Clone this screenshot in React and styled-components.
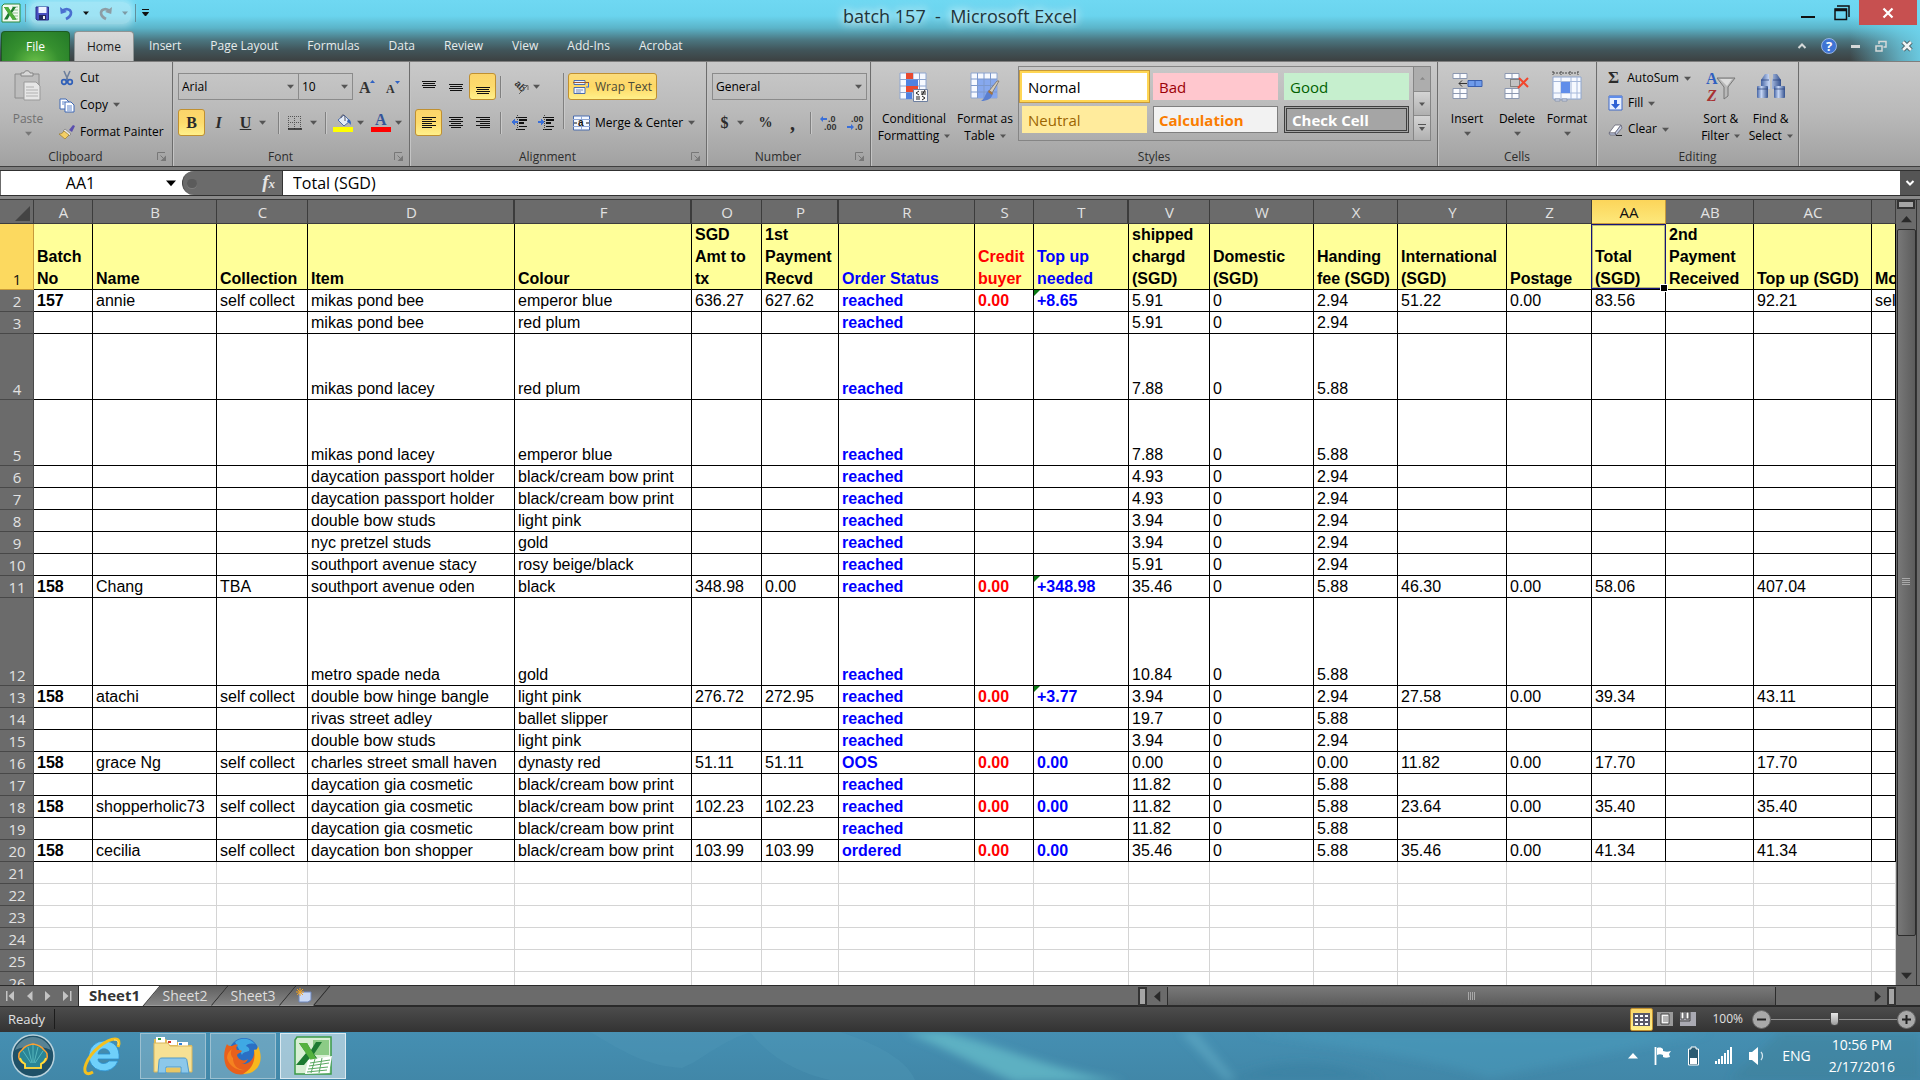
import React, { useState } from 'react';
import styled, { createGlobalStyle, css } from 'styled-components';

const GlobalStyle = createGlobalStyle`
	* {
		box-sizing:border-box;
	}

	body {
		margin:0;
		font-family:"Open Sans", "Noto Sans", sans-serif;
		font-size:12px;
		line-height:16px;
		color:#000;
		background-color:#6b6b6b;
	}

	button, input, select {
		margin:0;
		padding:0;
		border:0;
		border-radius:0;
		font:inherit;
		color:inherit;
		background:transparent;
		appearance:none;
		outline:0;
	}

	svg {
		display:block;
		flex-shrink:0;
		overflow:visible;
	}
`;

const Desktop = styled.div`
	display:flex;
	flex-direction:column;
	height:100vh;
	overflow:hidden;
`;

/* 제목 표시줄 */
const TopArea = styled.header`
	background:
		linear-gradient(to left, rgba(111,214,239,.9) 0, rgba(111,214,239,.7) 20px, rgba(111,214,239,0) 70px),
		linear-gradient(#6fd8f2 0, #6ad4ee 16px, #5bb4c9 28px, #4b7680 40px, #41555a 50px, #3d4344 60px);
`;

const TitleBar = styled.div`
	display:grid;
	grid-template-columns:1fr auto 1fr;
	align-items:start;
	height:31px;
`;

const QuickAccess = styled.div`
	display:flex;
	align-items:center;
	height:26px;
	padding-left:1px;
`;

const QuickGroup = styled.div`
	display:flex;
	align-items:center;
	gap:10px;
	height:22px;
	margin:0 4px;
	padding:0 3px 0 5px;
	border-radius:8px;
	background-color:rgba(255,255,255,.35);
	box-shadow:0 0 6px 3px rgba(255,255,255,.35);
`;

const QuickLine = styled.span`
	width:1px;
	height:18px;
	margin-left:4px;
	background-color:#5f8f9c;
`;

const Title = styled.h1`
	margin:0;
	font-size:18px;
	font-weight:400;
	line-height:32px;
	white-space:pre;
	color:#20343a;
	text-shadow:0 0 8px #fff, 0 0 12px rgba(255,255,255,.8);
`;

const WindowBtns = styled.div`
	display:flex;
	justify-content:flex-end;
	padding-right:3px;
`;

const WindowBtn = styled.button`
	display:flex;
	justify-content:center;
	align-items:center;
	width:${p => p.$close ? '58px' : '34px'};
	height:25px;
	background-color:${p => p.$close ? '#c75050' : 'transparent'};
`;

const TabBar = styled.nav`
	display:flex;
	align-items:stretch;
	height:30px;
	padding-left:1px;
`;

const FileTab = styled.button`
	width:69px;
	margin-right:4px;
	border:1px solid #1d5c22;
	border-bottom:0;
	border-radius:4px 4px 0 0;
	color:#fff;
	background:radial-gradient(ellipse at 50% 110%, #6cc24a 0, #36902f 50%, #237a28 100%);
`;

const RibbonTab = styled.button`
	margin-right:1px;
	padding:0 14px;
	border-radius:4px 4px 0 0;
	color:#e6ecec;

	${p => p.$on && css`
		padding:0 12px;
		color:#1b1b1b;
		border:1px solid #8e9494;
		border-bottom:0;
		background:linear-gradient(#d8d8d8, #c6c6c6);
	`}
`;

const DocBtns = styled.div`
	display:flex;
	align-items:center;
	gap:14px;
	margin-left:auto;
	padding-right:7px;
`;

/* 리본 메뉴 */
const Ribbon = styled.section`
	display:flex;
	height:106px;
	border-top:1px solid #7e7e7e;
	border-bottom:1px solid #3f3f3f;
	background:linear-gradient(#c9c9c9, #b9b9b9 50%, #a1a1a1);
`;

const Group = styled.div`
	display:flex;
	flex-direction:column;
	flex-shrink:0;
	width:${p => p.$w}px;
	border-right:1px solid #6d6d6d;
	box-shadow:1px 0 0 #c4c4c4;
`;

const GroupBody = styled.div`
	display:flex;
	flex:1;
	gap:${p => p.$gap || 0}px;
	padding:${p => p.$pad || '8px 5px 0'};
`;

const GroupFoot = styled.div`
	display:flex;
	align-items:center;
	gap:6px;
	height:18px;
	padding-right:${p => p.$launcher ? 5 : 0}px;
	color:#2c2c2c;

	span {
		flex:1;
		text-align:center;
	}
`;

const BigBtn = styled.button`
	display:flex;
	flex-direction:column;
	align-items:center;
	width:${p => p.$w}px;
	padding-top:6px;
	line-height:17px;
	white-space:nowrap;
	color:${p => p.$off ? '#707070' : '#000'};

	& > svg:first-child {
		margin-bottom:8px;
	}

	& > svg:last-child {
		margin-top:3px;
	}
`;

const BigText = styled.span`
	display:flex;
	align-items:center;
	gap:5px;
	min-height:17px;
`;

const Stack = styled.div`
	display:flex;
	flex-direction:column;
	align-items:flex-start;
	gap:${p => p.$gap || 0}px;
`;

const Line = styled.div`
	display:flex;
	align-items:center;
	gap:${p => p.$gap || 0}px;
	height:27px;
`;

const TextBtn = styled.button`
	display:flex;
	align-items:center;
	gap:5px;
	height:${p => p.$h || 27}px;
	padding:0 4px;
	border:1px solid transparent;
	border-radius:3px;
	white-space:nowrap;

	${p => p.$on && css`
		color:#4a4a3a;
		border-color:#c09030;
		background:linear-gradient(#fbdc7c, #fed865 50%, #fff08a);
	`}
`;

const ToolBtn = styled.button`
	display:flex;
	justify-content:center;
	align-items:center;
	gap:4px;
	width:${p => p.$w || 27}px;
	height:27px;
	border:1px solid transparent;
	border-radius:3px;

	${p => p.$on && css`
		border-color:#c09030;
		background:linear-gradient(#fbd46a, #fddb6c 50%, #fff08a);
	`}
`;

const Glyph = styled.span`
	font-family:"Liberation Serif", serif;
	font-size:${p => p.$size || 16}px;
	font-weight:bold;
	font-style:${p => p.$italic ? 'italic' : 'normal'};
	text-decoration:${p => p.$under ? 'underline' : 'none'};
	color:#2b2b2b;
`;

const VLine = styled.span`
	width:1px;
	height:${p => p.$h || 22}px;
	margin:0 ${p => p.$m || 4}px;
	background-color:#808080;
	box-shadow:1px 0 0 #c9c9c9;
`;

const Picker = styled.label`
	display:flex;
	align-items:center;
	width:${p => p.$w}px;
	height:27px;
	padding-right:4px;
	border:1px solid #8b8b8b;
	margin-left:${p => p.$joined ? '-1px' : '0'};

	select {
		flex:1;
		min-width:0;
		height:25px;
		padding-left:3px;
	}
`;

const Gallery = styled.div`
	display:flex;
	height:75px;
	border:1px solid #858585;
`;

const GalleryGrid = styled.div`
	display:grid;
	grid-template-columns:repeat(3, 125px);
	grid-auto-rows:27px;
	gap:6px;
	padding:6px 4px 0 3px;
`;

const StyleCell = styled.button`
	display:flex;
	align-items:center;
	padding:0 5px;
	font-size:15px;
	line-height:20px;
	font-weight:${p => p.$bold ? 'bold' : 'normal'};
	color:${p => p.$color};
	background-color:${p => p.$bg};
	border:${p => p.$border || '1px solid transparent'};

	${p => p.$on && css`
		outline:2px solid #ffd653;
		box-shadow:0 0 0 3px #c79a3a;
	`}
`;

const GalleryBtns = styled.div`
	display:flex;
	flex-direction:column;
	width:17px;
	border-left:1px solid #858585;
`;

const GalleryBtn = styled.button`
	display:flex;
	flex:1;
	justify-content:center;
	align-items:center;
	background:${p => p.$off ? '#adadad' : 'linear-gradient(#d4d4d4, #b0b0b0)'};

	& + & {
		border-top:1px solid #8b8b8b;
	}
`;

/* 수식 입력줄 */
const FormulaBar = styled.div`
	display:flex;
	height:33px;
	padding:4px 0 0 1px;
	background:linear-gradient(#7d7d7d 0, #7d7d7d 3px, #303030 3px, #303030 4px, #6b6b6b 4px, #6b6b6b 28px, #303030 28px, #303030 29px, #8a8a8a 29px, #8a8a8a 32px, #3a3a3a 32px);
	font-size:16px;
`;

const NameBox = styled.label`
	display:flex;
	align-items:center;
	width:193px;
	height:24px;
	padding-right:18px;
	background-color:#fff;

	input {
		flex:1;
		min-width:0;
		padding-right:6px;
		text-align:center;
	}
`;

const FxArea = styled.div`
	display:flex;
	justify-content:space-between;
	align-items:center;
	width:101px;
	height:24px;
	margin-left:-12px;
	padding:0 7px 0 4px;
	border-right:1px solid #333;
	border-left:1px solid #444;
	border-radius:12px 0 0 12px;
	background-color:#6b6b6b;
`;

const FxDot = styled.span`
	width:10px;
	height:9px;
	border-radius:5px;
	background-color:#5b5b5b;
	box-shadow:0 1px 0 #7c7c7c;
`;

const FxText = styled.span`
	font-family:"Liberation Serif", serif;
	font-size:19px;
	font-style:italic;
	font-weight:bold;
	color:#e4e4e4;

	small {
		font-size:13px;
	}
`;

const FormulaInput = styled.input`
	flex:1;
	height:24px;
	padding-left:10px;
	background-color:#fff;
`;

const ExpandBtn = styled.button`
	display:flex;
	justify-content:center;
	align-items:center;
	width:20px;
	height:24px;
	background-color:#555;
`;

/* 시트 */
const SheetArea = styled.main`
	display:flex;
	flex:1;
	min-height:0;
`;

const SheetView = styled.div`
	flex:1;
	min-width:0;
	overflow:hidden;
	background-color:#fff;
`;

const Table = styled.table`
	width:100%;
	table-layout:fixed;
	border-spacing:0;
	font-family:"Liberation Sans", Arial, sans-serif;
	font-size:16px;
	line-height:22px;
`;

const ColHead = styled.th`
	height:24px;
	padding:0;
	font-family:"Open Sans", sans-serif;
	font-size:15px;
	font-weight:400;
	line-height:23px;
	color:${p => p.$on ? '#111' : '#e2e2e2'};
	background:${p => p.$on ? 'linear-gradient(#fcd55a, #fde97c)' : '#6b6b6b'};
	box-shadow:inset -${p => p.$thick ? 2 : 1}px -1px 0 ${p => p.$on ? '#c79a3a' : '#3c3c3c'};

	svg {
		margin:2px 4px 0 auto;
	}
`;

const RowHead = styled.th`
	height:${p => p.$h}px;
	padding:0;
	font-family:"Open Sans", sans-serif;
	font-size:15px;
	font-weight:400;
	vertical-align:bottom;
	color:${p => p.$on ? '#111' : '#e2e2e2'};
	background:${p => p.$on ? '#fcd95f' : '#6b6b6b'};
	box-shadow:inset -1px -1px 0 ${p => p.$on ? '#c79a3a' : '#484848'};
`;

const inks = {
	red: '#f00',
	blue: '#00f',
	black: '#000'
};

const Cell = styled.td`
	position:relative;
	padding:0 0 0 3px;
	overflow:hidden;
	vertical-align:bottom;
	white-space:pre;
	font-weight:${p => p.$bold ? 'bold' : 'normal'};
	color:${p => inks[p.$ink] || '#000'};
	background-color:${p => p.$head ? '#ff9' : '#fff'};
	box-shadow:inset -1px -1px 0 ${p => p.$empty ? '#d4d4d4' : '#000'};

	${p => p.$flag && css`
		&::before {
			content:"";
			position:absolute;
			top:0;
			left:0;
			border-top:6px solid #0a7a14;
			border-right:6px solid transparent;
		}
	`}

	${p => p.$selected && css`
		overflow:visible;

		&::before {
			content:"";
			position:absolute;
			inset:0 0 1px -1px;
			border:1px solid #14147a;
			box-shadow:inset 0 0 0 1px #b8b878;
		}

		&::after {
			content:"";
			position:absolute;
			z-index:1;
			right:-2px;
			bottom:-2px;
			width:6px;
			height:6px;
			border:1px solid #fff;
			background-color:#000;
		}
	`}
`;

const VScroll = styled.div`
	display:flex;
	flex-direction:column;
	align-items:center;
	width:24px;
	padding-right:1px;
	border-right:3px solid #6b6b6b;
	background:linear-gradient(to right, #6b6b6b 20px, #333 20px);
`;

const SplitGrip = styled.span`
	flex-shrink:0;
	width:${p => p.$side ? '9px' : '18px'};
	height:${p => p.$side ? '19px' : '9px'};
	border:2px solid #333;
	background-color:#a5a5a5;
`;

const ScrollBtn = styled.button`
	display:flex;
	flex-shrink:0;
	justify-content:center;
	align-items:center;
	width:20px;
	height:20px;
`;

const VTrack = styled.div`
	flex:1;
	width:19px;
`;

const VThumb = styled.div`
	display:flex;
	justify-content:center;
	align-items:center;
	height:96%;
	border:1px solid #2c2c2c;
	border-radius:2px;
	background:linear-gradient(to right, #787878, #5c5c5c);
`;

const SheetFoot = styled.div`
	display:grid;
	grid-template-columns:minmax(0, 1138fr) minmax(0, 782fr);
	height:22px;
	border-top:1px solid #2a2a2a;
	border-bottom:2px solid #2a2a2a;
	background-color:#6b6b6b;
`;

const SheetTabs = styled.div`
	display:flex;
	min-width:0;
	overflow:hidden;
`;

const SheetNav = styled.div`
	position:relative;
	z-index:3;
	display:flex;
	justify-content:space-around;
	align-items:center;
	width:79px;
	border-right:1px solid #2a2a2a;
	background-color:#6b6b6b;
`;

const SheetTab = styled.button`
	position:relative;
	z-index:${p => p.$on ? 2 : 1};
	width:${p => p.$w}px;
	padding:0 2px 2px 0;
	font-size:${p => p.$on ? 15 : 14}px;
	font-weight:${p => p.$on ? 'bold' : 'normal'};
	line-height:17px;
	color:${p => p.$on ? '#333' : '#dedede'};

	&::before {
		content:"";
		position:absolute;
		z-index:-1;
		inset:0 0 0 ${p => p.$on ? '-14px' : '0'};
		border-right:1px solid #222;
		border-bottom:${p => p.$on ? '0' : '1px solid #999'};
		background:${p => p.$on ? '#fff' : 'linear-gradient(#5f5f5f, #868686)'};
		transform:skewX(-40deg);
	}

	svg {
		margin:0 auto;
	}
`;

const HScroll = styled.div`
	display:flex;
	align-items:center;
	padding-right:24px;
`;

const HTrack = styled.div`
	flex:1;
	height:19px;
`;

const HThumb = styled.div`
	display:flex;
	justify-content:center;
	align-items:center;
	width:87%;
	height:19px;
	border:1px solid #2c2c2c;
	border-top:0;
	background:linear-gradient(#787878, #5c5c5c);
`;

/* 상태 표시줄 */
const StatusBar = styled.div`
	display:flex;
	align-items:center;
	height:25px;
	padding:0 4px 1px 8px;
	color:#e2e2e2;
	background:linear-gradient(#4c4c4c, #333);
`;

const StatusText = styled.span`
	font-size:13px;
	padding-right:9px;
	border-right:1px solid #1c1c1c;
	line-height:20px;
`;

const StatusRight = styled.div`
	display:flex;
	align-items:center;
	margin-left:auto;
`;

const ViewBtn = styled.button`
	display:flex;
	justify-content:center;
	align-items:center;
	width:23px;
	height:23px;
	border-radius:2px;
	border:${p => p.$on ? '1px solid #c09030' : '0'};
	background:${p => p.$on ? 'linear-gradient(#fbd668, #fff08a)' : 'transparent'};
`;

const ZoomValue = styled.span`
	margin:0 9px 0 13px;
`;

const ZoomRange = styled.input`
	width:126px;
	height:20px;
	background:linear-gradient(#8f8f8f, #8f8f8f) center / 100% 1px no-repeat;

	&::-webkit-slider-thumb {
		appearance:none;
		width:9px;
		height:14px;
		border:1px solid #444;
		border-radius:1px 1px 4px 4px;
		background:linear-gradient(#e8e8e8, #9c9c9c);
	}
`;

/* 작업 표시줄 */
const Taskbar = styled.footer`
	position:relative;
	display:flex;
	align-items:center;
	gap:4px;
	height:48px;
	overflow:hidden;
	color:#fff;
	background:linear-gradient(#458fb2, #4187a8);
`;

const Wave = styled.svg`
	position:absolute;
	top:0;
	left:0;
	width:100%;
	height:100%;
`;

const TaskBtn = styled.button`
	position:relative;
	display:flex;
	justify-content:center;
	align-items:center;
	width:66px;
	height:46px;
	border:1px solid ${p => p.$active ? '#dceaf1' : p.$open ? '#9cc0d1' : 'transparent'};
	background-color:${p => p.$active ? 'rgba(255,255,255,.5)' : p.$open ? 'rgba(255,255,255,.2)' : 'transparent'};
`;

const Tray = styled.div`
	position:relative;
	display:flex;
	align-items:center;
	gap:16px;
	margin-left:auto;
	padding-right:25px;
	font-size:14px;
`;

const Clock = styled.div`
	margin-left:2px;
	line-height:22px;
	text-align:center;
`;

const Arrow = ({ w = 7, color = '#555', dir = 'down' }) => {
	const turn = { down: 0, left: 90, up: 180, right: 270 }[dir];
	return (
		<svg width={w} height={w} viewBox="0 0 8 8" aria-hidden="true">
			<path d="M0 2h8L4 6.500z" fill={color} transform={`rotate(${turn} 4 4)`} />
		</svg>
	);
};

const Launcher = () => (
	<svg width="10" height="10" viewBox="0 0 10 10" fill="none">
		<path d="M.5 8V.5H8" stroke="#777" />
		<path d="M3.500 3.500l3 3" stroke="#777" />
		<path d="M9 3.500V9H3.500z" fill="#777" />
	</svg>
);

const ExcelMini = () => (
	<svg width="20" height="20" viewBox="0 0 20 20">
		<path d="M3 1h16v18H1V3z" fill="#f4faf2" stroke="#2c8a3a" />
		<path d="M11 4h6M12 7h5M12 10h5M12 13h5M11 16h6" stroke="#8dc391" />
		<path d="M3 4h4l2.500 4L12 4h3l-4 6 4.500 6.500h-4L9 12l-2.500 4.500H3L7 10z" fill="#1f7a2f" />
		<path d="M3 4h4l8.500 12.500h-4z" fill="#4fae3c" />
	</svg>
);

const SaveIcon = () => (
	<svg width="15" height="15" viewBox="0 0 15 15">
		<path d="M1 1h12.500v13H2l-1-1z" fill="#4a4fc0" stroke="#2b2e8c" />
		<path d="M3.500 1h8v6h-8z" fill="#eef2ff" />
		<path d="M4 9h7v5H4z" fill="#24265e" />
		<path d="M8 10h2v3H8z" fill="#eee" />
	</svg>
);

const UndoIcon = ({ flip, color }) => (
	<svg width="13" height="14" viewBox="0 0 13 14">
		<g transform={flip ? 'translate(13 0) scale(-1 1)' : undefined}>
			<path d="M2 5.500C5 2 10.500 2.500 11 6.500c.2 3-2 5-5 6.500" fill="none" stroke={color} strokeWidth="2.600" />
			<path d="M0 1l.8 7 6-2z" fill={color} />
		</g>
	</svg>
);

const PasteIcon = () => (
	<svg width="28" height="32" viewBox="0 0 28 32">
		<path d="M1 4h24v24H1z" fill="#bdbdbd" stroke="#8c8c8c" />
		<path d="M7 6V3h3c0-3 6-3 6 0h3v3z" fill="#d8d8d8" stroke="#858585" />
		<path d="M10 12h12l4 4v14H10z" fill="#e6e6e6" stroke="#999" />
		<path d="M12 17h8M12 20h12M12 23h12M12 26h12" stroke="#b0b0b0" />
	</svg>
);

const CutIcon = () => (
	<svg width="16" height="16" viewBox="0 0 16 16" fill="none">
		<path d="M5 1l4 9M11 1L7 10" stroke="#6d7f9c" strokeWidth="1.600" />
		<circle cx="5" cy="12" r="2.300" stroke="#2f5fb8" strokeWidth="1.700" />
		<circle cx="11" cy="12" r="2.300" stroke="#2f5fb8" strokeWidth="1.700" />
	</svg>
);

const CopyIcon = () => (
	<svg width="16" height="16" viewBox="0 0 16 16">
		<path d="M1 2h6l3 3v7H1z" fill="#fff" stroke="#3f68b5" />
		<path d="M6 5h6l3 3v7H6z" fill="#fff" stroke="#3f68b5" />
		<path d="M3 5h3M3 7h2M8 9h5M8 11h5M8 13h5" stroke="#5f86cc" />
	</svg>
);

const BrushIcon = () => (
	<svg width="16" height="16" viewBox="0 0 16 16">
		<path d="M10 6l4-5 2 1-3 6z" fill="#5a4fae" />
		<path d="M6 5l6 5-2 2-6-5z" fill="#e8e8e8" stroke="#777" strokeWidth=".7" />
		<path d="M5 7l5 4-4 4-6-5c2 0 4-1 5-3z" fill="#f3cf66" stroke="#9a7a28" strokeWidth=".7" />
	</svg>
);

const GrowIcon = ({ small }) => (
	<svg width="16" height="16" viewBox="0 0 16 16">
		<text x="0" y="14" fontFamily="Liberation Serif, serif" fontWeight="bold" fontSize={small ? 12 : 16} fill="#333">A</text>
		<path d={small ? 'M9 2h5l-2.500 3z' : 'M11 4h5l-2.500-3z'} fill="#2f62c4" />
	</svg>
);

const BorderIcon = () => (
	<svg width="14" height="14" viewBox="0 0 14 14" stroke="#555" strokeDasharray="1 1">
		<path d="M.5 0v13M6.500 0v13M12.500 0v13M0 .5h13M0 6.500h13" fill="none" />
		<path d="M0 13h14" stroke="#222" strokeWidth="1.500" strokeDasharray="none" />
	</svg>
);

const FillIcon = () => (
	<svg width="20" height="18" viewBox="0 0 20 18">
		<path d="M5 6l6-5 6 6-6 5z" fill="#e4ecf8" stroke="#4e6ea8" />
		<path d="M8 4c0-4 4-4 4 0v3" fill="none" stroke="#556" />
		<path d="M15 5c3 1 3.500 4 2.500 6-1-2-2-3-3.500-3z" fill="#3568c0" />
		<path d="M0 13h20v5H0z" fill="#ff0" />
	</svg>
);

const InkIcon = () => (
	<svg width="20" height="18" viewBox="0 0 20 18">
		<text x="4" y="11" fontFamily="Liberation Serif, serif" fontWeight="bold" fontSize="16" fill="#34549a">A</text>
		<path d="M0 13h20v5H0z" fill="#f00" />
	</svg>
);

// rows: [x, width] of each stroke, y = top of the first stroke
const LinesIcon = ({ rows, y = 0 }) => (
	<svg width="14" height="14" viewBox="0 0 14 14" shapeRendering="crispEdges">
		{
			rows.map((r, idx) => (
				<rect key={idx} x={r[0]} y={y + idx * 2} width={r[1]} height="1" fill="#111" />
			))
		}
	</svg>
);

const vLines = [[0, 14], [1, 12], [0, 14], [1, 12]];
const leftLines = [[0, 14], [0, 10], [0, 14], [0, 10], [0, 14], [0, 10]];
const midLines = [[0, 14], [2, 10], [0, 14], [2, 10], [0, 14], [2, 10]];
const rightLines = [[0, 14], [4, 10], [0, 14], [4, 10], [0, 14], [4, 10]];

const OrientIcon = () => (
	<svg width="16" height="16" viewBox="0 0 16 16">
		<text x="1" y="7" fontFamily="Liberation Sans, sans-serif" fontWeight="bold" fontSize="10" fill="#333" transform="rotate(45 3 6)">ab</text>
		<path d="M6 15l8-8M10.500 6.500H15V11" fill="none" stroke="#666" />
	</svg>
);

const IndentIcon = ({ out }) => (
	<svg width="16" height="16" viewBox="0 0 16 16" shapeRendering="crispEdges">
		<path d="M5 2.500h11M8 5.500h8M8 8.500h5M8 11.500h8M5 14.500h9" stroke="#111" />
		<path d="M8 4.500h8M8 7.500h5" stroke="#111" />
		<path d="M6.500 0v16" stroke="#444" strokeDasharray="1 1" />
		<path d={out ? 'M0 7l4-3v2h3v2H4v2z' : 'M6 7L3 4v2H0v2h3v2z'} fill="#3a6fd8" />
	</svg>
);

const WrapIcon = () => (
	<svg width="17" height="16" viewBox="0 0 17 16">
		<path d="M1 1.500h11v4H1zM1 8.500h11v6H1z" fill="#eef3ff" stroke="#4a6cae" />
		<path d="M0 3.500h16" stroke="#a05a2c" />
		<path d="M15.500 4v4M13 8h3" stroke="#3a6fd8" />
		<path d="M3 11h7M3 13h5" stroke="#7a8fb8" />
	</svg>
);

const MergeIcon = () => (
	<svg width="17" height="16" viewBox="0 0 17 16">
		<path d="M.5 1h16v14H.5z" fill="#f4f8ff" stroke="#4a6cae" />
		<path d="M0 4.500h17M0 11.500h17M8.500 1v3M8.500 12v3" stroke="#8fa8d8" />
		<text x="5" y="11" fontFamily="Liberation Sans, sans-serif" fontWeight="bold" fontSize="10" fill="#111">a</text>
		<path d="M1 8h3M13 8h3" stroke="#111" />
	</svg>
);

const DecimalIcon = ({ less }) => (
	<svg width="17" height="16" viewBox="0 0 17 16" fontFamily="Liberation Sans, sans-serif" fontWeight="bold" fontSize="9" fill="#333">
		<text x={less ? 4 : 8} y="7">{less ? '.00' : '.0'}</text>
		<text x={less ? 8 : 4} y="15">{less ? '.0' : '.00'}</text>
		<path d={less ? 'M7 12L4 9v2H0v2h4v2z' : 'M0 4l3-3v2h4v2H3v2z'} fill="#3a6fd8" />
	</svg>
);

const CondIcon = () => (
	<svg width="30" height="30" viewBox="0 0 30 30">
		<path d="M1 1h26v26H1z" fill="#f6f9ff" stroke="#8ea6d0" />
		<path d="M7.500 1v26M14 1v26M20.500 1v26M1 7.500h26M1 14h26M1 20.500h26" stroke="#8ea6d0" />
		<path d="M7 1h7v6H7zM7 14h12v6H7z" fill="#e8492f" />
		<path d="M7 7.500h12V14H7zM7 20.500h6V27H7z" fill="#4f81e0" />
		<path d="M14.500 17.500h14v12h-14z" fill="#f8f8f8" stroke="#6d7fa0" />
		<path d="M20 19l-3 2 3 2M17 25h4M17 27h4M22 20h5M22 22h5M26 18l-3 5M23 24l3 2-3 2" fill="none" stroke="#222" />
	</svg>
);

const TableIcon = () => (
	<svg width="30" height="30" viewBox="0 0 30 30">
		<path d="M1 1h26v25H1z" fill="#f6f9ff" stroke="#8ea6d0" />
		<path d="M8 7h19v19H8z" fill="#86a8ee" />
		<path d="M7.500 1v25M14 1v25M20.500 1v25M1 7h26M1 13.500h26M1 20h26" stroke="#7c98cc" />
		<path d="M29 9l-7 12-3-2 8-10z" fill="#d4cdbc" stroke="#6e665a" strokeWidth=".7" />
		<path d="M19 18l4 3c-1 6-6 8-12 8 4-2 4-8 8-11z" fill="#5a7fd0" />
		<path d="M19 18l4 3-1 2-4-3z" fill="#a8743a" />
	</svg>
);

const InsertIcon = () => (
	<svg width="30" height="30" viewBox="0 0 30 30">
		<path d="M1 1.500h14v5H1zM1 16.500h14v10H1zM8 1.500v5M8 16.500v10M1 21.500h14" fill="#fbfcff" stroke="#8b97b0" />
		<path d="M16 8.500h14v6H16z" fill="#6f9bea" stroke="#3a5fae" />
		<path d="M23 8.500v6" stroke="#3a5fae" />
		<path d="M7 11.500h8M10 8.500l-3 3 3 3" fill="none" stroke="#333" />
	</svg>
);

const DeleteIcon = () => (
	<svg width="26" height="30" viewBox="0 0 26 30">
		<path d="M1 1.500h14v5H1zM1 16.500h14v10H1zM8 1.500v5M8 16.500v10M1 21.500h14" fill="#fbfcff" stroke="#8b97b0" />
		<path d="M6.500 7.500h9v7h-9z" fill="none" stroke="#444" strokeDasharray="1 1" />
		<path d="M15 6l9 9M24 6l-10 10" stroke="#f2462c" strokeWidth="2" />
	</svg>
);

const FormatIcon = () => (
	<svg width="30" height="30" viewBox="0 0 30 30">
		<path d="M1 1h25M1 -1v4M26 -1v4M9 -1v4M18 -1v4" stroke="#444" strokeDasharray="2 1" />
		<path d="M1 5h28v22H1z" fill="#f6f9ff" stroke="#8ea6d0" />
		<path d="M9 5v22M19 5v22M25 5v22M1 9.500h28M1 21h28" stroke="#a6b8da" />
		<path d="M9 10h9v11H9z" fill="#5f8dea" />
		<path d="M3 27h5v2H3zM10 27h5v2h-5z" fill="#dfe6f4" stroke="#8b97b0" />
	</svg>
);

const FillDownIcon = () => (
	<svg width="15" height="16" viewBox="0 0 15 16">
		<path d="M1 1h13v14H1z" fill="#e8f0ff" stroke="#3f68c8" />
		<path d="M1 1h13v2H1z" fill="#5f8dea" />
		<path d="M6 5h3v4h3l-4.500 5L3 9h3z" fill="#2f62d4" />
	</svg>
);

const ClearIcon = () => (
	<svg width="15" height="15" viewBox="0 0 15 15">
		<path d="M7 3h6l-6 8H1z" fill="#fff" stroke="#667" strokeWidth=".8" />
		<path d="M13 3l1 3-6 7-1-2zM1 11h6l1 2H2z" fill="#c3cde4" stroke="#667" strokeWidth=".8" />
		<path d="M8 13.500h6" stroke="#222" />
	</svg>
);

const SortIcon = () => (
	<svg width="30" height="30" viewBox="0 0 30 30">
		<path d="M11 6h18l-7 9v9l-4 3V15z" fill="#b9b9b9" stroke="#777" />
		<path d="M14 7h12l-5 7z" fill="#ddd" />
		<text x="0" y="12" fontFamily="Liberation Serif, serif" fontWeight="bold" fontSize="16" fill="#2f5fc0">A</text>
		<text x="1" y="29" fontFamily="Liberation Serif, serif" fontWeight="bold" fontStyle="italic" fontSize="16" fill="#a83232">Z</text>
	</svg>
);

const FindIcon = () => (
	<svg width="30" height="30" viewBox="0 0 30 30">
		<defs>
			<linearGradient id="lens" x1="0" x2="1">
				<stop offset="0" stopColor="#4564a4" />
				<stop offset=".4" stopColor="#c6d6f4" />
				<stop offset="1" stopColor="#34518e" />
			</linearGradient>
		</defs>
		<path d="M9 2h4v4l1 2v9h-3L5 14V8zM17 2h4l4 6v6l-6 3h-3V8l1-2z" fill="url(#lens)" />
		<rect x="1" y="14" width="11" height="12" rx="1" fill="url(#lens)" />
		<rect x="18" y="14" width="11" height="12" rx="1" fill="url(#lens)" />
		<path d="M5 8h8M17 8h8M1 17h11M18 17h11" stroke="#2e4880" strokeWidth=".8" />
	</svg>
);

const Chevron = ({ up, color = '#fff' }) => (
	<svg width="10" height="8" viewBox="0 0 10 8" fill="none">
		<path d={up ? 'M1.500 6L5 2.500 8.500 6' : 'M1.500 2L5 5.500 8.500 2'} stroke={color} strokeWidth="2" />
	</svg>
);

const StartIcon = () => (
	<svg width="44" height="44" viewBox="0 0 44 44">
		<circle cx="22" cy="22" r="21" fill="#1f5168" stroke="#b9d2dc" strokeWidth="1.500" />
		<path d="M4 16a19 19 0 0 1 36 0c-12-5-24-5-36 0z" fill="#6f97a6" opacity=".7" />
		<path d="M14 34v-4c-5-2-7-6-6-10 0-2 2-3 3-4 2-3 5-5 11-6 6 1 9 3 11 6 1 1 3 2 3 4 1 4-1 8-6 10v4z" fill="#2a8596" stroke="#ffa030" strokeWidth="1.500" />
		<path d="M9 24c1 3 3 5 5 6v4h16v-4c2-1 4-3 5-6" fill="none" stroke="#ffe23a" strokeWidth="1.700" />
		<path d="M12 17l8 12M17 13l4 16M22 11v18M27 13l-4 16M32 17l-8 12" stroke="#57b7bd" strokeWidth="1" />
	</svg>
);

const IeIcon = () => (
	<svg width="40" height="40" viewBox="0 0 40 40">
		<path d="M21 5a15 15 0 1 0 14 20h-9c-3 4-11 3-11-2h21C37 11 31 5 21 5zm-6 13c1-7 11-7 12 0z" fill="#6fd0fa" stroke="#2a8fd0" strokeWidth=".8" fillRule="evenodd" />
		<path d="M35 11c2-5 1-8-3-8C24 3 8 15 3 28c-3 8 0 12 7 8" fill="none" stroke="#f4c01e" strokeWidth="3" />
		<path d="M35 9c1-4-1-5-4-5" fill="none" stroke="#ffe88a" />
	</svg>
);

const FolderIcon = () => (
	<svg width="40" height="40" viewBox="0 0 40 40">
		<path d="M1 3h12l2 3h10l2 3h12v26H1z" fill="#e3bd58" />
		<path d="M3 1h9v6H3zM14 4h10v5H14zM25 6h10v5H25z" fill="#fff" />
		<path d="M5 2h3v2H5z" fill="#2f9a3c" />
		<path d="M15 5h3v2h-3z" fill="#d8352a" />
		<path d="M26 7h3v2h-3z" fill="#2f7fd8" />
		<path d="M1 7h14l2 3h22v26H1z" fill="#f6e194" stroke="#d9b65c" />
		<path d="M6 25c0-2 1-3 3-3h22c2 0 3 1 3 3l2 12h-8v-6H13v6H5z" fill="#8cc8ea" stroke="#4f9acb" />
		<path d="M13 32h14v4H13z" fill="#e8c765" />
	</svg>
);

const FirefoxIcon = () => (
	<svg width="40" height="40" viewBox="0 0 40 40">
		<circle cx="21" cy="17" r="15" fill="#2a6fc4" />
		<path d="M12 6c6-5 15-4 20 2-5-1-8 0-9 2 3 1 4 3 3 5-3 1-6 1-7 4z" fill="#3fa9e4" />
		<path d="M4 8c1 2 3 2 5 2 2-1 4-2 6-1-2 2-2 3-1 5 2 0 4 0 5 1-1 2-4 2-5 4 1 5 7 7 11 4-1 3-4 5-7 5 8 1 14-5 13-14 4 9 2 16-3 21-8 6-20 4-25-5C0 22 1 14 4 8z" fill="#e8601c" />
		<path d="M31 14c2-1 3 1 4-4 4 9 4 18-3 24-3 3-8 4-12 4 9-5 13-13 11-24z" fill="#f8b71e" />
		<path d="M4 22c2 8 10 13 18 12-8 0-12-5-12-12-2-2-3-6-1-9-3 2-5 5-5 9z" fill="#f58220" />
	</svg>
);

const ExcelIcon = () => (
	<svg width="40" height="40" viewBox="0 0 40 40">
		<path d="M4 1h34v37H2V4z" fill="#d8efd4" stroke="#3b9a47" strokeWidth="1.500" />
		<path d="M20 4h16v15H20z" fill="#8ccb86" />
		<path d="M6 7h8l4 7 5-8h6l-8 12 8 11h-8l-4-7-6 7H3l10-12z" fill="#1d7a32" />
		<path d="M6 7h8l13 22h-6z" fill="#55b23f" />
		<path d="M15 24l24-4-3 17-24 1z" fill="#fff" />
		<path d="M17 27l20-3M16 30l20-3M15 33l20-2M14 36l20-2M22 23l-4 14M29 22l-3 15" stroke="#5aa861" />
	</svg>
);

const FlagIcon = () => (
	<svg width="18" height="20" viewBox="0 0 18 20">
		<path d="M1.500 1v18" stroke="#fff" strokeWidth="1.800" />
		<path d="M3 2c3-1 5 0 6 1v2c3 1 5 1 8 0l-2 3 1 3c-3 1-5 1-7 0V9C7 8 5 8 3 9z" fill="#fff" />
	</svg>
);

const BatteryIcon = () => (
	<svg width="11" height="20" viewBox="0 0 11 20">
		<path d="M3 1h5v2h2.500v16H.500V3H3z" fill="#2b5c73" stroke="#fff" />
		<path d="M2 12h7v6H2z" fill="#fff" />
	</svg>
);

const SignalIcon = () => (
	<svg width="17" height="18" viewBox="0 0 17 18" fill="#fff">
		<path d="M0 14h2v3H0zM3 12h2v5H3zM6 9h2v8H6zM9 6h2v11H9zM12 3h2v14h-2zM15 0h2v17h-2z" />
	</svg>
);

const SoundIcon = () => (
	<svg width="18" height="20" viewBox="0 0 18 20">
		<path d="M1 6h3l6-5v18l-6-5H1z" fill="#fff" />
		<path d="M13 6c2 2 2 6 0 8" fill="none" stroke="#d4e6ee" strokeWidth="1.300" />
	</svg>
);

const Grip = ({ side }) => (
	<svg width="8" height="8" viewBox="0 0 8 8" shapeRendering="crispEdges">
		<path d={side ? 'M0 .500h8M0 2.500h8M0 4.500h8M0 6.500h8' : 'M.500 0v8M2.500 0v8M4.500 0v8M6.500 0v8'} stroke="#a8a8a8" />
	</svg>
);

const tabs = ['Insert', 'Page Layout', 'Formulas', 'Data', 'Review', 'View', 'Add-Ins', 'Acrobat'];

const cellStyles = [
	{ name: 'Normal', color: '#000', bg: '#fff', on: true },
	{ name: 'Bad', color: '#9c0006', bg: '#ffc7ce' },
	{ name: 'Good', color: '#006100', bg: '#c6efce' },
	{ name: 'Neutral', color: '#9c6500', bg: '#ffeb9c' },
	{ name: 'Calculation', color: '#fa7d00', bg: '#f2f2f2', bold: true, border: '1px solid #7f7f7f' },
	{ name: 'Check Cell', color: '#fff', bg: '#a5a5a5', bold: true, border: '3px double #3f3f3f' }
];

const cols = [
	{ id: 'A', w: 59, head: 'Batch\nNo', bold: true },
	{ id: 'B', w: 124, head: 'Name' },
	{ id: 'C', w: 91, head: 'Collection' },
	{ id: 'D', w: 207, head: 'Item', thick: true },
	{ id: 'F', w: 177, head: 'Colour', thick: true },
	{ id: 'O', w: 70, head: 'SGD\nAmt to\ntx' },
	{ id: 'P', w: 77, head: '1st\nPayment\nRecvd', thick: true },
	{ id: 'R', w: 136, head: 'Order Status', bold: true, ink: 'blue' },
	{ id: 'S', w: 59, head: 'Credit\nbuyer', bold: true, ink: 'red' },
	{ id: 'T', w: 95, head: 'Top up\nneeded', bold: true, ink: 'blue', thick: true },
	{ id: 'V', w: 81, head: 'shipped\nchargd\n(SGD)' },
	{ id: 'W', w: 104, head: 'Domestic\n(SGD)' },
	{ id: 'X', w: 84, head: 'Handing\nfee (SGD)' },
	{ id: 'Y', w: 109, head: 'International\n(SGD)' },
	{ id: 'Z', w: 85, head: 'Postage' },
	{ id: 'AA', w: 74, head: 'Total\n(SGD)' },
	{ id: 'AB', w: 88, head: '2nd\nPayment\nReceived' },
	{ id: 'AC', w: 118, head: 'Top up (SGD)' },
	{ id: '', head: 'Mo' }
];

// 빈 칸이 많은 행: 상품, 색상, 상태, 배송비, 수수료
const line = (item, colour, ship, fee, h) => ({
	h: h || 22,
	cells: ['', '', '', item, colour, '', '', 'reached', '', '', ship, '0', fee]
});

const rows = [
	{ h: 22, cells: ['157', 'annie', 'self collect', 'mikas pond bee', 'emperor blue', '636.27', '627.62', 'reached', '0.00', '+8.65', '5.91', '0', '2.94', '51.22', '0.00', '83.56', '', '92.21', 'self'] },
	line('mikas pond bee', 'red plum', '5.91', '2.94'),
	line('mikas pond lacey', 'red plum', '7.88', '5.88', 66),
	line('mikas pond lacey', 'emperor blue', '7.88', '5.88', 66),
	line('daycation passport holder', 'black/cream bow print', '4.93', '2.94'),
	line('daycation passport holder', 'black/cream bow print', '4.93', '2.94'),
	line('double bow studs', 'light pink', '3.94', '2.94'),
	line('nyc pretzel studs', 'gold', '3.94', '2.94'),
	line('southport avenue stacy', 'rosy beige/black', '5.91', '2.94'),
	{ h: 22, cells: ['158', 'Chang', 'TBA', 'southport avenue oden', 'black', '348.98', '0.00', 'reached', '0.00', '+348.98', '35.46', '0', '5.88', '46.30', '0.00', '58.06', '', '407.04'] },
	line('metro spade neda', 'gold', '10.84', '5.88', 88),
	{ h: 22, cells: ['158', 'atachi', 'self collect', 'double bow hinge bangle', 'light pink', '276.72', '272.95', 'reached', '0.00', '+3.77', '3.94', '0', '2.94', '27.58', '0.00', '39.34', '', '43.11'] },
	line('rivas street adley', 'ballet slipper', '19.7', '5.88'),
	line('double bow studs', 'light pink', '3.94', '2.94'),
	{ h: 22, cells: ['158', 'grace Ng', 'self collect', 'charles street small haven', 'dynasty red', '51.11', '51.11', 'OOS', '0.00', '0.00', '0.00', '0', '0.00', '11.82', '0.00', '17.70', '', '17.70'] },
	line('daycation gia cosmetic', 'black/cream bow print', '11.82', '5.88'),
	{ h: 22, cells: ['158', 'shopperholic73', 'self collect', 'daycation gia cosmetic', 'black/cream bow print', '102.23', '102.23', 'reached', '0.00', '0.00', '11.82', '0', '5.88', '23.64', '0.00', '35.40', '', '35.40'] },
	line('daycation gia cosmetic', 'black/cream bow print', '11.82', '5.88'),
	{ h: 22, cells: ['158', 'cecilia', 'self collect', 'daycation bon shopper', 'black/cream bow print', '103.99', '103.99', 'ordered', '0.00', '0.00', '35.46', '0', '5.88', '35.46', '0.00', '41.34', '', '41.34'] }
];

const emptyRows = [21, 22, 23, 24, 25, 26];

const Foot = ({ children, launcher = true }) => (
	<GroupFoot $launcher={launcher}>
		<span>{children}</span>
		{launcher && <Launcher />}
	</GroupFoot>
);

const Header = () => (
	<TopArea>
		<TitleBar>
			<QuickAccess>
				<ExcelMini />
				<QuickLine />
				<QuickGroup>
					<SaveIcon />
					<UndoIcon color="#4a6fd0" />
					<Arrow w={6} color="#111" />
					<UndoIcon color="#8d9ca4" flip />
					<Arrow w={6} color="#7d9aa4" />
				</QuickGroup>
				<svg width="1" height="18"><path d="M0 0h1v18H0z" fill="#5f8f9c" /></svg>
				<svg width="18" height="10" viewBox="0 0 18 10">
					<path d="M6 1.500h7M6.500 4.500h6L9.500 8z" stroke="#111" strokeWidth="1" fill="#111" />
				</svg>
			</QuickAccess>
			<Title>batch 157  -  Microsoft Excel</Title>
			<WindowBtns>
				<WindowBtn aria-label="Minimize">
					<svg width="14" height="14"><path d="M0 10h14v2H0z" fill="#111" /></svg>
				</WindowBtn>
				<WindowBtn aria-label="Restore">
					<svg width="16" height="16" viewBox="0 0 16 16" fill="none" stroke="#111">
						<path d="M1 4h11.500v10.500H1z" strokeWidth="1.500" />
						<path d="M1 5h11.500" strokeWidth="2.500" />
						<path d="M3 1h12v11" strokeWidth="1.500" />
					</svg>
				</WindowBtn>
				<WindowBtn $close aria-label="Close">
					<svg width="12" height="12" viewBox="0 0 12 12"><path d="M1.500 1.500l9 9M10.500 1.500l-9 9" stroke="#fff" strokeWidth="2.200" /></svg>
				</WindowBtn>
			</WindowBtns>
		</TitleBar>
		<TabBar>
			<FileTab>File</FileTab>
			<RibbonTab $on>Home</RibbonTab>
			{
				tabs.map(name => <RibbonTab key={name}>{name}</RibbonTab>)
			}
			<DocBtns>
				<Chevron up color="#d5d9d9" />
				<svg width="16" height="16" viewBox="0 0 16 16">
					<circle cx="8" cy="8" r="7.500" fill="#3f74d4" stroke="#a9c4f0" strokeWidth=".8" />
					<text x="8" y="13" textAnchor="middle" fontFamily="Open Sans, sans-serif" fontWeight="bold" fontSize="13" fill="#fff">?</text>
				</svg>
				<svg width="10" height="10"><path d="M0 4h9v3H0z" fill="#d5d9d9" /></svg>
				<svg width="12" height="12" viewBox="0 0 12 12" fill="none" stroke="#d5d9d9" strokeWidth="1.500">
					<path d="M1 6h6v5H1zM4 4V1.500h7V7H8.500" />
				</svg>
				<svg width="12" height="12" viewBox="0 0 12 12"><path d="M2 2l8 8M10 2l-8 8" stroke="#41555a" strokeWidth="4.500" /><path d="M2 2l8 8M10 2l-8 8" stroke="#eef4f4" strokeWidth="2.600" /></svg>
			</DocBtns>
		</TabBar>
	</TopArea>
);

const RibbonArea = () => (
	<Ribbon>
		<Group $w={173}>
			<GroupBody $pad="2px 0 0 2px">
				<BigBtn $w={52} $off>
					<PasteIcon />
					<BigText>Paste</BigText>
					<Arrow color="#777" />
				</BigBtn>
				<Stack>
					<TextBtn><CutIcon />Cut</TextBtn>
					<TextBtn><CopyIcon />Copy <Arrow /></TextBtn>
					<TextBtn><BrushIcon />Format Painter</TextBtn>
				</Stack>
			</GroupBody>
			<Foot>Clipboard</Foot>
		</Group>
		<Group $w={237}>
			<GroupBody $pad="11px 5px 0">
				<Stack $gap={9}>
					<Line>
						<Picker $w={121}>
							<select aria-label="Font" defaultValue="Arial"><option>Arial</option></select>
							<Arrow />
						</Picker>
						<Picker $w={55} $joined>
							<select aria-label="Font size" defaultValue="10"><option>10</option></select>
							<Arrow />
						</Picker>
						<ToolBtn aria-label="Grow font"><GrowIcon /></ToolBtn>
						<ToolBtn aria-label="Shrink font"><GrowIcon small /></ToolBtn>
					</Line>
					<Line>
						<ToolBtn $on><Glyph>B</Glyph></ToolBtn>
						<ToolBtn><Glyph $italic>I</Glyph></ToolBtn>
						<ToolBtn $w={42}><Glyph $under>U</Glyph><span /><Arrow /></ToolBtn>
						<VLine />
						<ToolBtn $w={38} aria-label="Borders"><BorderIcon /><span /><Arrow /></ToolBtn>
						<VLine />
						<ToolBtn $w={37} aria-label="Fill color"><FillIcon /><Arrow /></ToolBtn>
						<ToolBtn $w={38} aria-label="Font color"><InkIcon /><Arrow /></ToolBtn>
					</Line>
				</Stack>
			</GroupBody>
			<Foot>Font</Foot>
		</Group>
		<Group $w={297}>
			<GroupBody $pad="11px 5px 0">
				<Stack $gap={9}>
					<Line>
						<ToolBtn aria-label="Top align"><LinesIcon rows={vLines} y={1} /></ToolBtn>
						<ToolBtn aria-label="Middle align"><LinesIcon rows={vLines} y={4} /></ToolBtn>
						<ToolBtn $on aria-label="Bottom align"><LinesIcon rows={vLines} y={7} /></ToolBtn>
						<VLine />
						<ToolBtn $w={42} aria-label="Orientation"><OrientIcon /><Arrow /></ToolBtn>
					</Line>
					<Line>
						<ToolBtn $on aria-label="Align left"><LinesIcon rows={leftLines} y={1} /></ToolBtn>
						<ToolBtn aria-label="Center"><LinesIcon rows={midLines} y={1} /></ToolBtn>
						<ToolBtn aria-label="Align right"><LinesIcon rows={rightLines} y={1} /></ToolBtn>
						<VLine />
						<ToolBtn aria-label="Decrease indent"><IndentIcon out /></ToolBtn>
						<ToolBtn aria-label="Increase indent"><IndentIcon /></ToolBtn>
					</Line>
				</Stack>
				<VLine $h={56} $m={4} />
				<Stack $gap={9}>
					<TextBtn $on><WrapIcon />Wrap Text</TextBtn>
					<TextBtn><MergeIcon />Merge &amp; Center <Arrow /></TextBtn>
				</Stack>
			</GroupBody>
			<Foot>Alignment</Foot>
		</Group>
		<Group $w={164}>
			<GroupBody $pad="11px 3px 0 5px">
				<Stack $gap={9}>
					<Picker $w={155}>
						<select aria-label="Number format" defaultValue="General"><option>General</option></select>
						<Arrow />
					</Picker>
					<Line>
						<ToolBtn $w={40}><Glyph>$</Glyph><span /><Arrow /></ToolBtn>
						<ToolBtn><Glyph $size={14}>%</Glyph></ToolBtn>
						<ToolBtn><Glyph $size={20}>,</Glyph></ToolBtn>
						<VLine $m={4} />
						<ToolBtn aria-label="Increase decimal"><DecimalIcon /></ToolBtn>
						<ToolBtn aria-label="Decrease decimal"><DecimalIcon less /></ToolBtn>
					</Line>
				</Stack>
			</GroupBody>
			<Foot>Number</Foot>
		</Group>
		<Group $w={567}>
			<GroupBody $pad="4px 0 0 5px">
				<BigBtn $w={76}>
					<CondIcon />
					<BigText>Conditional</BigText>
					<BigText>Formatting <Arrow w={6} /></BigText>
				</BigBtn>
				<BigBtn $w={66}>
					<TableIcon />
					<BigText>Format as</BigText>
					<BigText>Table <Arrow w={6} /></BigText>
				</BigBtn>
				<Gallery>
					<GalleryGrid>
						{
							cellStyles.map(s => (
								<StyleCell key={s.name} $color={s.color} $bg={s.bg} $bold={s.bold} $border={s.border} $on={s.on}>{s.name}</StyleCell>
							))
						}
					</GalleryGrid>
					<GalleryBtns>
						<GalleryBtn $off aria-label="Row up"><Arrow dir="up" w={5} color="#888" /></GalleryBtn>
						<GalleryBtn aria-label="Row down"><Arrow w={6} /></GalleryBtn>
						<GalleryBtn aria-label="More">
							<svg width="8" height="8" viewBox="0 0 8 8"><path d="M0 0h8v1H0zM1 3h6L4 7z" fill="#555" /></svg>
						</GalleryBtn>
					</GalleryBtns>
				</Gallery>
			</GroupBody>
			<Foot launcher={false}>Styles</Foot>
		</Group>
		<Group $w={159}>
			<GroupBody $pad="4px 0 0 4px">
				<BigBtn $w={50}><InsertIcon /><BigText>Insert</BigText><Arrow /></BigBtn>
				<BigBtn $w={50}><DeleteIcon /><BigText>Delete</BigText><Arrow /></BigBtn>
				<BigBtn $w={50}><FormatIcon /><BigText>Format</BigText><Arrow /></BigBtn>
			</GroupBody>
			<Foot launcher={false}>Cells</Foot>
		</Group>
		<Group $w={202}>
			<GroupBody $pad="4px 0 0 6px">
				<Stack>
					<TextBtn $h={24}><Glyph $size={17}>Σ</Glyph>&nbsp;AutoSum <Arrow /></TextBtn>
					<TextBtn $h={26}><FillDownIcon />Fill <Arrow /></TextBtn>
					<TextBtn $h={26}><ClearIcon />Clear <Arrow /></TextBtn>
				</Stack>
				<BigBtn $w={50}>
					<SortIcon />
					<BigText>Sort &amp;</BigText>
					<BigText>Filter <Arrow w={6} /></BigText>
				</BigBtn>
				<BigBtn $w={50}>
					<FindIcon />
					<BigText>Find &amp;</BigText>
					<BigText>Select <Arrow w={6} /></BigText>
				</BigBtn>
			</GroupBody>
			<Foot launcher={false}>Editing</Foot>
		</Group>
	</Ribbon>
);

const Sheet = () => (
	<SheetArea>
		<SheetView>
			<Table>
				<colgroup>
					<col width="34" />
					{
						cols.map((c, idx) => <col key={idx} width={c.w} />)
					}
				</colgroup>
				<thead>
					<tr>
						<ColHead aria-label="Select all">
							<svg width="15" height="15"><path d="M15 0v15H0z" fill="#444" /></svg>
						</ColHead>
						{
							cols.map((c, idx) => (
								<ColHead key={idx} $on={c.id === 'AA'} $thick={c.thick}>{c.id}</ColHead>
							))
						}
					</tr>
				</thead>
				<tbody>
					<tr>
						<RowHead $h={66} $on>1</RowHead>
						{
							cols.map((c, idx) => (
								<Cell key={idx} $head $bold $ink={c.ink} $selected={c.id === 'AA'}>{c.head}</Cell>
							))
						}
					</tr>
					{
						rows.map((row, idx) => (
							<tr key={idx}>
								<RowHead $h={row.h}>{idx + 2}</RowHead>
								{
									cols.map((c, i) => (
										<Cell key={i} $bold={c.bold} $ink={c.ink} $flag={c.id === 'T' && (row.cells[i] || '').startsWith('+')}>
											{row.cells[i]}
										</Cell>
									))
								}
							</tr>
						))
					}
					{
						emptyRows.map(num => (
							<tr key={num}>
								<RowHead $h={22}>{num}</RowHead>
								{
									cols.map((c, i) => <Cell key={i} $empty />)
								}
							</tr>
						))
					}
				</tbody>
			</Table>
		</SheetView>
		<VScroll>
			<SplitGrip />
			<ScrollBtn aria-label="Scroll up"><Arrow dir="up" w={11} color="#2a2a2a" /></ScrollBtn>
			<VTrack>
				<VThumb><Grip side /></VThumb>
			</VTrack>
			<ScrollBtn aria-label="Scroll down"><Arrow w={11} color="#2a2a2a" /></ScrollBtn>
		</VScroll>
	</SheetArea>
);

const App = () => {
	const [formula, setFormula] = useState('Total (SGD)');
	const [cellName, setCellName] = useState('AA1');
	const [zoom, setZoom] = useState(100);

	return (
		<Desktop>
			<GlobalStyle />
			<Header />
			<RibbonArea />
			<FormulaBar>
				<NameBox>
					<input aria-label="Name box" value={cellName} onChange={(e) => setCellName(e.target.value)} />
					<Arrow w={10} color="#000" />
				</NameBox>
				<FxArea>
					<FxDot />
					<FxText>f<small>x</small></FxText>
				</FxArea>
				<FormulaInput aria-label="Formula" value={formula} onChange={(e) => setFormula(e.target.value)} />
				<ExpandBtn aria-label="Expand"><Chevron /></ExpandBtn>
			</FormulaBar>
			<Sheet />
			<SheetFoot>
				<SheetTabs>
					<SheetNav>
						<svg width="9" height="10" viewBox="0 0 9 10" fill="#c4c4c4"><path d="M0 0h1.500v10H0zM8 0v10L2.500 5z" /></svg>
						<svg width="6" height="10" viewBox="0 0 6 10" fill="#c4c4c4"><path d="M5.500 0v10L0 5z" /></svg>
						<svg width="6" height="10" viewBox="0 0 6 10" fill="#c4c4c4"><path d="M0 0v10l5.500-5z" /></svg>
						<svg width="9" height="10" viewBox="0 0 9 10" fill="#c4c4c4"><path d="M7 0h1.500v10H7zM0 0v10l5.500-5z" /></svg>
					</SheetNav>
					<SheetTab $on $w={73}>Sheet1</SheetTab>
					<SheetTab $w={68}>Sheet2</SheetTab>
					<SheetTab $w={68}>Sheet3</SheetTab>
					<SheetTab $w={34} aria-label="Insert worksheet">
						<svg width="16" height="15" viewBox="0 0 16 15">
							<path d="M3 4h12v8l-3 2H3z" fill="#c9d8f4" stroke="#6c86bc" />
							<path d="M4 0v8M0 4h8M1 1l6 6M7 1L1 7" stroke="#f0a020" />
						</svg>
					</SheetTab>
				</SheetTabs>
				<HScroll>
					<SplitGrip $side />
					<ScrollBtn aria-label="Scroll left"><Arrow dir="left" w={11} color="#2a2a2a" /></ScrollBtn>
					<HTrack>
						<HThumb><Grip /></HThumb>
					</HTrack>
					<ScrollBtn aria-label="Scroll right"><Arrow dir="right" w={11} color="#2a2a2a" /></ScrollBtn>
					<SplitGrip $side />
				</HScroll>
			</SheetFoot>
			<StatusBar>
				<StatusText>Ready</StatusText>
				<StatusRight>
					<ViewBtn $on aria-label="Normal view">
						<svg width="17" height="13" viewBox="0 0 17 13"><path d="M0 0h17v13H0z" fill="#5a5a6a" /><path d="M2 2h3v2H2zM7 2h3v2H7zM12 2h3v2h-3zM2 6h3v2H2zM7 6h3v2H7zM12 6h3v2h-3zM2 10h3v2H2zM7 10h3v2H7zM12 10h3v2h-3z" fill="#fff" /></svg>
					</ViewBtn>
					<ViewBtn aria-label="Page layout view">
						<svg width="16" height="14" viewBox="0 0 16 14"><path d="M0 0h16v14H0z" fill="#9a9a9a" /><path d="M4 2h8v10H4z" fill="#f4f4f4" stroke="#444" /><path d="M6 5h5M6 7h5M6 9h5" stroke="#777" /></svg>
					</ViewBtn>
					<ViewBtn aria-label="Page break preview">
						<svg width="16" height="14" viewBox="0 0 16 14"><path d="M0 0h16v14H0z" fill="#a9a9b2" /><path d="M1 0h3v7H1zM6 0h3v7H6z" fill="#fff" stroke="#444" /><path d="M0 9h10V0" fill="none" stroke="#444" /></svg>
					</ViewBtn>
					<ZoomValue>{zoom}%</ZoomValue>
					<button aria-label="Zoom out">
						<svg width="19" height="19" viewBox="0 0 19 19"><circle cx="9.500" cy="9.500" r="9" fill="#a9a9a9" stroke="#666" /><path d="M5 9.500h9" stroke="#222" strokeWidth="2" /></svg>
					</button>
					<ZoomRange type="range" min="0" max="200" aria-label="Zoom" value={zoom} onChange={(e) => setZoom(e.target.value)} />
					<button aria-label="Zoom in">
						<svg width="19" height="19" viewBox="0 0 19 19"><circle cx="9.500" cy="9.500" r="9" fill="#a9a9a9" stroke="#666" /><path d="M5 9.500h9M9.500 5v9" stroke="#222" strokeWidth="2" /></svg>
					</button>
				</StatusRight>
			</StatusBar>
			<Taskbar>
				<Wave viewBox="0 0 1920 48" preserveAspectRatio="none">
					<defs>
						<filter id="soft" x="-10%" y="-50%" width="120%" height="200%"><feGaussianBlur stdDeviation="4" /></filter>
					</defs>
					<path d="M590 0c40 24 60 34 92 36 20-8 40-28 70-36z" fill="#5199b8" opacity=".35" />
					<path d="M750 0c20 26 50 42 80 48h85c-10-24-50-40-75-48z" fill="#529bb8" opacity=".3" />
					<g filter="url(#soft)">
						<path d="M905 0c50 20 80 38 110 50h110C1060 40 1000 14 945 0z" fill="#6ac0cc" opacity=".7" />
						<path d="M1180 0h16l40 48h-10z" fill="#69b4cc" opacity=".5" />
						<path d="M1250 0c80 14 160 20 240 46l220-46z" fill="#4c9ebf" opacity=".4" />
						<path d="M1780 0h140v48h-190z" fill="#3a7a90" opacity=".35" />
						<path d="M1230 48c40-20 90-26 150 0z" fill="#397f9f" opacity=".5" />
					</g>
				</Wave>
				<TaskBtn aria-label="Start"><StartIcon /></TaskBtn>
				<TaskBtn aria-label="Internet Explorer"><IeIcon /></TaskBtn>
				<TaskBtn $open aria-label="File Explorer"><FolderIcon /></TaskBtn>
				<TaskBtn $open aria-label="Firefox"><FirefoxIcon /></TaskBtn>
				<TaskBtn $active aria-label="Excel"><ExcelIcon /></TaskBtn>
				<Tray>
					<Arrow dir="up" w={10} color="#fff" />
					<FlagIcon />
					<BatteryIcon />
					<SignalIcon />
					<SoundIcon />
					<span>ENG</span>
					<Clock>10:56 PM<br />2/17/2016</Clock>
				</Tray>
			</Taskbar>
		</Desktop>
	);
};

export default App;
